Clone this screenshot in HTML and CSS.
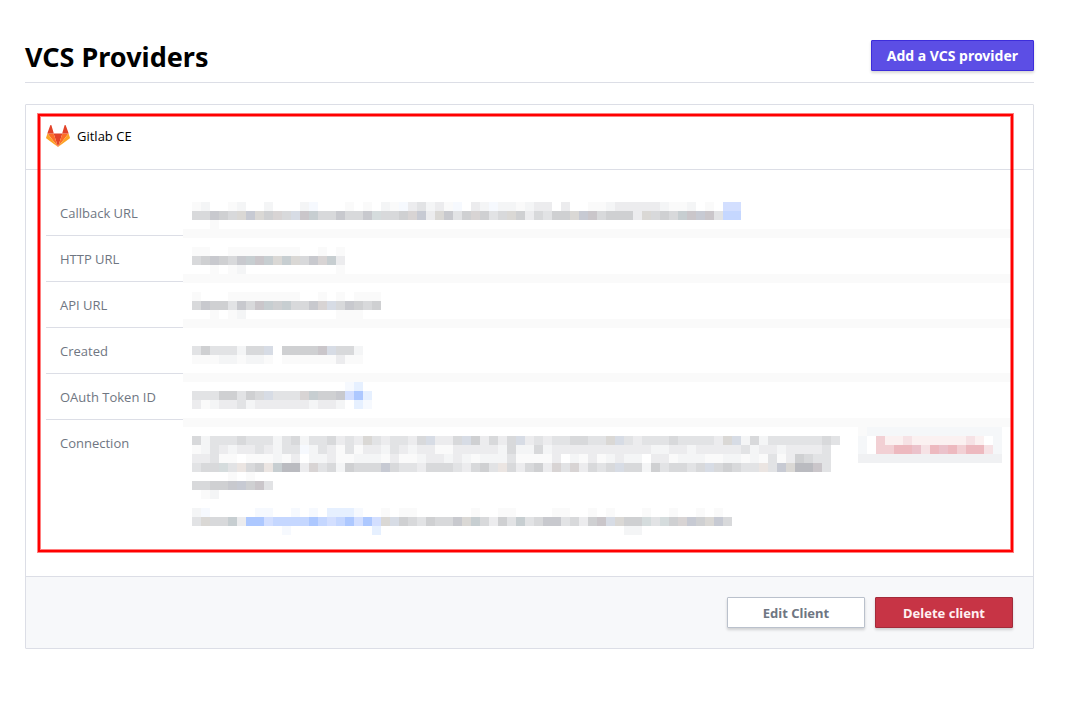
FILE: index.html
```html
<!DOCTYPE html>
<html lang="en">
<head>
<meta charset="utf-8">
<meta name="viewport" content="width=device-width, initial-scale=1">
<title>VCS Providers</title>
<link rel="stylesheet" href="styles.css">
</head>
<body>
<main class="page">
  <header class="page-header">
    <h1 class="page-title">VCS Providers</h1>
    <button type="button" class="button button-primary">Add a VCS provider</button>
  </header>
  <section class="card">
    <header class="card-header">
      <svg class="logo" viewBox="0 0 24 22" aria-hidden="true">
        <path fill="#e24329" d="M12 22 16.4 8.500H7.600z"/>
        <path fill="#fc6d26" d="M12 22 7.600 8.500H1.500z"/>
        <path fill="#fca326" d="M1.500 8.500.1 12.600c-.1.4 0 .8.3 1L12 22z"/>
        <path fill="#e24329" d="M1.300 8.500h6.500L5.500.4c-.2-.6-1.100-.6-1.300 0z"/>
        <path fill="#fc6d26" d="M12 22l4.400-13.500h6.100z"/>
        <path fill="#fca326" d="M22.500 8.500l1.400 4.100c.1.4 0 .8-.3 1L12 22z"/>
        <path fill="#e24329" d="M22.700 8.500h-6.500L18.500.4c.2-.6 1.100-.6 1.300 0z"/>
      </svg>
      <span>Gitlab CE</span>
    </header>
    <div class="card-body">
      <table class="details">
        <tbody>
          <tr><th scope="row">Callback URL</th><td rowspan="6"><svg class="mosaic" id="mosaic" role="img" aria-label="Redacted values"></svg></td></tr>
          <tr><th scope="row">HTTP URL</th></tr>
          <tr><th scope="row">API URL</th></tr>
          <tr><th scope="row">Created</th></tr>
          <tr><th scope="row">OAuth Token ID</th></tr>
          <tr class="last"><th scope="row">Connection</th></tr>
        </tbody>
      </table>
    </div>
    <footer class="card-footer">
      <button type="button" class="button button-plain">Edit Client</button>
      <button type="button" class="button button-danger">Delete client</button>
    </footer>
    <div class="highlight"></div>
  </section>
</main>
<script src="mosaic.js"></script>
</body>
</html>
```
FILE: styles.css
```css
* { box-sizing: border-box; }
body {
  margin: 0;
  background: #fff;
  color: #000;
  font: 13px/20px "Open Sans", "Noto Sans", sans-serif;
}
.page { padding: 40px 33px 40px 25px; }
.page-header {
  display: flex;
  justify-content: space-between;
  align-items: flex-start;
  padding-bottom: 8px;
  margin-bottom: 21px;
  border-bottom: 1px solid #dcdee6;
}
.page-title {
  margin: 0;
  font: 700 27px/34px "Noto Sans", sans-serif;
}
.button {
  height: 31px;
  padding: 0 15px;
  border: 1px solid;
  border-radius: 1px;
  font: 700 13px/20px "Noto Sans", sans-serif;
  box-shadow: 0 2px 3px rgba(0, 0, 0, 0.16);
  cursor: pointer;
}
.button-primary { background: #5c4ee5; border-color: #3d2ddb; color: #fff; font-size: 14px; }
.button-plain { min-width: 138px; background: #fff; border-color: #bac1cc; color: #6f7682; }
.button-danger { min-width: 138px; background: #c73445; border-color: #a32b3a; color: #fff0f2; }
.card {
  position: relative;
  border: 1px solid #dcdee6;
  border-radius: 1px;
}
.card-header {
  display: flex;
  align-items: center;
  gap: 7px;
  height: 65px;
  padding: 0 20px 2px;
  border-bottom: 1px solid #dcdee6;
}
.logo { width: 24px; height: 22px; }
.card-body { padding: 20px 21px 40px 20px; }
.details { width: 100%; border-collapse: separate; border-spacing: 0; }
.details th {
  width: 137px;
  height: 46px;
  padding: 0 14px;
  border-bottom: 1px solid #dcdee6;
  color: #6f7682;
  font-weight: 400;
  text-align: left;
  white-space: nowrap;
}
.details td { padding: 0; vertical-align: top; }
.details .last th { height: 116px; padding-top: 13px; border-bottom: 0; vertical-align: top; }
.mosaic { display: block; width: 100%; height: 346px; }
.card-footer {
  display: flex;
  justify-content: flex-end;
  gap: 10px;
  padding: 20px;
  border-top: 1px solid #dcdee6;
  background: #f7f8fa;
}
.highlight {
  position: absolute;
  inset: 9px 20px 96px 12px;
  border: 2px solid #f00;
  box-shadow: 0 0 0 1px rgba(255, 0, 0, 0.5), inset 0 0 0 1px rgba(255, 0, 0, 0.5);
  pointer-events: none;
}
```
FILE: mosaic.js
```js
// Draws the pixelated blocks that hide private values, 9px to a cell.
const CELL = 9;
const COLORS = {
  1: '#fafafa', 2: '#f4f5f6', 3: '#ececee', 4: '#e2e3e5', 5: '#d8d9db', 6: '#cfd0d2',
  7: '#c8c9ce', 8: '#babbc0', r: '#d8d4d4', R: '#cac6ca', b: '#d7dce5', v: '#c7cad3',
  c: '#c7ced1', C: '#d5dcdd', w: '#dad8d5', e: '#ebe5e2', g: '#f5f7f9', h: '#f0f1f3',
  B: '#adc8ff', l: '#c5d7ff', m: '#d3dfff', n: '#e6f0ff', o: '#f6f9fe',
  P: '#edb9bf', x: '#ebc2cb', p: '#f2d0d4', q: '#f6e2e5', s: '#fbf1f1'
};
const BLOCKS = [
  { x: 9, y: 12, rows: [
    '12..12..2...2o...1.1.21o34231o.32o221233.3..112333332112.1.mm',
    '55765wvw6r5bRc557557C556rv3w746r645w635466wvR56663w565cRvR4ll',
    '..1'] },
  { x: 9, y: 57, rows: ['11..11111111..1.1', '567657cRcwcw57rc3', '..1.12..........1'] },
  { x: 9, y: 102, rows: ['1...11111111..1.1.111', '5766475Rc6c557rb57656', '..1.12..........111'] },
  { x: 9, y: 156, rows: ['46444255b.6666Rb552', '111221221.111111311'] },
  { x: 9, y: 192, rows: ['.................on', '44466465b444rc667mBn', '31233423333332332.no'] },
  { x: 9, y: 246, rows: [
    '5244454442452445343w434435b335b63535b343445544wb43444544443wb25244444454',
    '124323343244o24314133243233113333325225233333333333223323333342332' + '33334',
    '33411.111213.2231122213112332321222411113.21312322.33122211221214136544',
    '455C4e56ec883r4526555v544355543564e53563r4r3545b552645545b56544e4vw88R4',
    '....1.1',
    '55667v6R4',
    '.12',
    '',
    '2o.....oo..o.o.nnno..1.11......1..11....11..1.1...1..1..1.1',
    '4w55c3BBmllllBlmlBmBmwb6546557wc5364c45774536Rbw66C4C6rv6wv5',
    '..........o.........n...........................22'] },
  { x: 675, y: 237, rows: ['1ggggggggggggggg', 'g.pssqssssssqs.g', 'g.ppPPxqPxPpPPqg', 'hhhhhhhhhhhhhhhh'] }
];
const svg = document.getElementById('mosaic');
function rect(x, y, width, fill) {
  const el = document.createElementNS('http://www.w3.org/2000/svg', 'rect');
  el.setAttribute('x', x);
  el.setAttribute('y', y);
  el.setAttribute('width', width);
  el.setAttribute('height', CELL);
  el.setAttribute('fill', fill);
  el.setAttribute('shape-rendering', 'crispEdges');
  svg.appendChild(el);
}
[39, 84, 129, 183, 228].forEach(y => rect(0, y, '100%', COLORS[1]));
BLOCKS.forEach(({ x, y, rows }) => rows.forEach((row, r) => {
  [...row].forEach((key, c) => {
    if (COLORS[key]) rect(x + c * CELL, y + r * CELL, CELL, COLORS[key]);
  });
}));
```
